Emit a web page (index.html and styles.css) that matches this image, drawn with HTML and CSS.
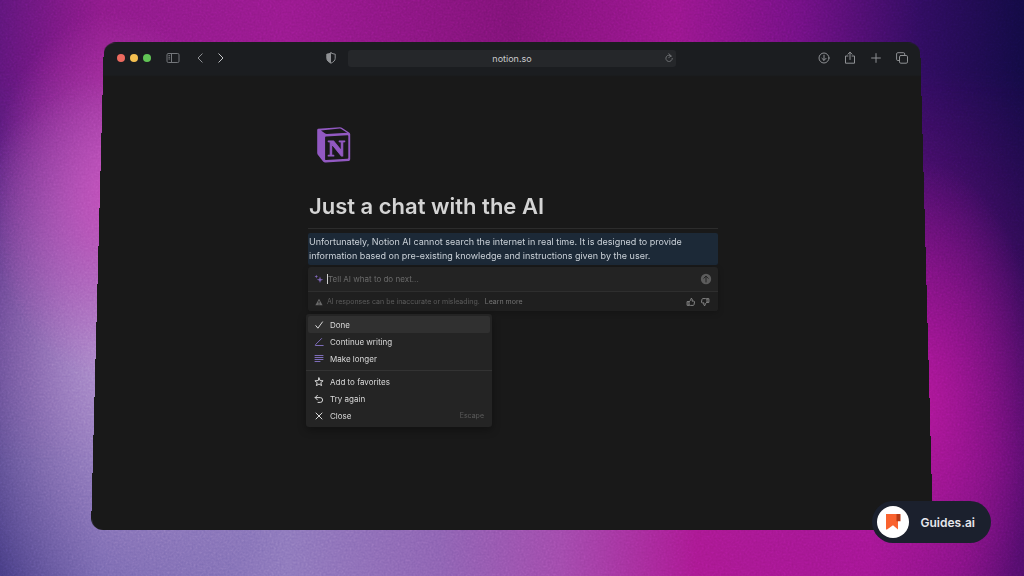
FILE: index.html
```html
<!DOCTYPE html>
<html lang="en">
<head>
<meta charset="utf-8">
<meta name="viewport" content="width=device-width, initial-scale=1">
<title>Just a chat with the AI</title>
<link rel="stylesheet" href="styles.css">
</head>
<body class="stage">
<svg class="grain" aria-hidden="true"><filter id="noise"><feTurbulence type="fractalNoise" baseFrequency="0.5" numOctaves="2" seed="4"/><feColorMatrix type="saturate" values="0"/></filter><rect width="100%" height="100%" filter="url(#noise)"/></svg>
<div class="window">
  <header class="toolbar">
    <div class="tools">
      <div class="lights"><i class="light red"></i><i class="light yellow"></i><i class="light green"></i></div>
      <button class="icon-btn sidebar" aria-label="Show sidebar"><svg width="14" height="12" viewBox="0 0 14 12"><rect x="1" y="1.500" width="12" height="9" rx="1.300"/><path d="M5.500 1.500v9M2.800 3.600h.9M2.800 5.300h.9M2.800 7h.9"/></svg></button>
      <div class="nav">
        <button class="icon-btn" aria-label="Back"><svg width="8" height="12" viewBox="0 0 8 12"><path d="M6.200 1.800 2 6l4.200 4.200"/></svg></button>
        <button class="icon-btn bright" aria-label="Forward"><svg width="8" height="12" viewBox="0 0 8 12"><path d="M1.800 1.800 6 6l-4.200 4.200"/></svg></button>
      </div>
      <button class="icon-btn shield" aria-label="Privacy report"><svg width="12" height="12" viewBox="0 0 12 12"><path d="M6 .9c1.300.8 2.700 1.100 4.200 1.200v4.200c0 2.200-1.700 3.700-4.200 4.900C3.500 10 1.800 8.500 1.800 6.300V2.100C3.300 2 4.700 1.700 6 .9Z"/><path class="solid" d="M6 .9v10.300C3.500 10 1.800 8.500 1.800 6.300V2.100C3.300 2 4.700 1.700 6 .9Z"/></svg></button>
    </div>
    <div class="address">
      <input class="address-input" type="text" value="notion.so" aria-label="Address">
      <button class="icon-btn reload" aria-label="Reload"><svg width="10" height="10" viewBox="0 0 10 10"><path d="M7.300 3A3.200 3.200 0 1 0 8.300 5.400M4.800.7 7.300 3 4.800 4.500"/></svg></button>
    </div>
    <div class="actions">
      <button class="icon-btn" aria-label="Downloads"><svg width="12" height="12" viewBox="0 0 12 12"><circle cx="6" cy="6" r="5"/><path d="M6 3.200v5M3.900 6.300 6 8.400l2.100-2.100"/></svg></button>
      <button class="icon-btn" aria-label="Share"><svg width="12" height="14" viewBox="0 0 12 14"><path d="M4 5H1.500v7.200h9V5H8M6 8.500V1.300M3.900 3.200 6 1.200l2.100 2"/></svg></button>
      <button class="icon-btn" aria-label="New tab"><svg width="12" height="12" viewBox="0 0 12 12"><path d="M6 1.600v8.800M1.600 6h8.800"/></svg></button>
      <button class="icon-btn" aria-label="Tab overview"><svg width="12" height="12" viewBox="0 0 12 12"><rect x="3.500" y="3.500" width="8" height="7.700" rx="1.300"/><path d="M3.500 8.500H1.800a1.200 1.200 0 0 1-1.200-1.200V1.900A1.200 1.200 0 0 1 1.800.7h5.700a1.200 1.200 0 0 1 1.200 1.200v1.600"/></svg></button>
    </div>
  </header>
  <main class="page">
    <svg class="logo" width="38" height="38" viewBox="0 0 38 38" role="img" aria-label="Notion"><path class="face" fill-rule="evenodd" d="M3 2.800 25 1.200q1.200 0 2.200.7l7.200 4.800q.8.600.8 1.600v25q0 1.500-1.600 1.700L10.500 36.500q-1.500.1-2.400-1.100L3 28.900q-.8-1-.8-2.200V4q0-1 .8-1.200ZM6 4.400l4.200 3.200q.6.400 1.500.4l20.500-1.300-6-3.800q-.6-.4-1.400-.3ZM11 10.600q-.9.100-.9 1v21.600q0 1 1 .9l21.200-1.300q1-.1 1-1V10.100q0-.9-.9-.8Z"/><text class="logo-letter" x="21.500" y="30" text-anchor="middle">N</text></svg>
    <h1 class="title">Just a chat with the AI</h1>
    <p class="answer">Unfortunately, Notion AI cannot search the internet in real time. It is designed to provide information based on pre-existing knowledge and instructions given by the user.</p>
    <section class="prompt">
      <div class="prompt-row">
        <svg class="spark" width="10" height="10" viewBox="0 0 10 10"><path d="M6 2.500 6.800 5l2.500.8-2.500.8L6 9.100l-.8-2.500-2.500-.8L5.200 5ZM2.300.8l.5 1.300 1.300.5-1.300.5-.5 1.300-.5-1.300L.5 2.600l1.300-.5Z"/></svg>
        <span class="caret"></span>
        <input class="prompt-input" type="text" placeholder="Tell AI what to do next..." aria-label="Tell AI what to do next">
        <button class="icon-btn send" aria-label="Send"><svg width="12" height="12" viewBox="0 0 12 12"><circle cx="6" cy="6" r="5.200"/><path d="M6 9V3.300M3.800 5.300 6 3.100l2.200 2.200"/></svg></button>
      </div>
      <div class="prompt-row note">
        <svg class="warn" width="8" height="8" viewBox="0 0 8 8"><path d="M4 .8 7.600 7.200H.4Z"/><path class="mark" d="M4 3.400v1.200M4 6v.1"/></svg>
        <span class="note-text">AI responses can be inaccurate or misleading.</span>
        <a class="more" href="#">Learn more</a>
        <button class="icon-btn thumb" aria-label="Good response"><svg width="10" height="10" viewBox="0 0 10 10"><path d="M1.500 4.600h1.500v3.700H1.500ZM3 4.800 4.700 3.200l.4-1.800q1.200 0 1.200 1.300L6 4.100h1.700q.9.100.8.900L8 7.700q-.2.700-.9.700H4.300L3 8"/></svg></button>
        <button class="icon-btn thumb" aria-label="Bad response"><svg width="10" height="10" viewBox="0 0 10 10"><path d="M8.500 5.400H7V1.700h1.500ZM7 5.200 5.300 6.800l-.4 1.800q-1.200 0-1.200-1.300L4 5.900H2.300q-.9-.1-.8-.9L2 2.300q.2-.7.9-.7h2.800L7 2"/></svg></button>
      </div>
    </section>
    <nav class="menu" aria-label="AI actions">
      <div class="group">
        <button class="item active"><svg width="10" height="10" viewBox="0 0 10 10"><path d="m1.800 5.600 2.100 2.600 4.600-6.300"/></svg>Done</button>
        <button class="item"><svg class="violet" width="10" height="10" viewBox="0 0 10 10"><path d="M7.600 1.500 1.800 7.300l-.5 1.200h7.900"/></svg>Continue writing</button>
        <button class="item"><svg class="violet" width="10" height="10" viewBox="0 0 10 10"><path d="M1 1.500h8M1 3.500h8M1 5.500h8M1 7.500h5"/></svg>Make longer</button>
      </div>
      <div class="group">
        <button class="item"><svg width="10" height="10" viewBox="0 0 10 10"><path d="m5 .9 1.100 2.700 3 .2-2.300 1.900.8 2.900L5 7 2.400 8.600l.8-2.900L.9 3.800l3-.2Z"/></svg>Add to favorites</button>
        <button class="item"><svg width="10" height="10" viewBox="0 0 10 10"><path d="M3.400 1.300 1.200 3.600l2.200 2.300M1.200 3.600h5a2.300 2.300 0 0 1 0 4.800H4"/></svg>Try again</button>
        <button class="item"><svg width="10" height="10" viewBox="0 0 10 10"><path d="m2 2 6 6M8 2 2 8"/></svg>Close<kbd class="key">Escape</kbd></button>
      </div>
    </nav>
  </main>
</div>
<a class="badge" href="#"><span class="badge-mark"><svg width="18" height="20" viewBox="0 0 18 20"><path fill="#f9622e" d="M2 2h12v15.500l-5-4.200-6 4.200H2Z"/><path fill="#b83b16" d="M12.500 2H16q.5 0 .5.600v6.600h-4Z"/></svg></span>Guides.ai</a>
</body>
</html>
```
FILE: styles.css
```css
* { box-sizing: border-box; }

.stage {
  margin: 0;
  min-height: 100vh;
  padding: 42px 91px 46px;
  display: flex;
  flex-direction: column;
  position: relative;
  overflow: hidden;
  font-family: Inter, "Liberation Sans", sans-serif;
  color: #d4d4d4;
  background: linear-gradient(90deg, #443a80 0%, #6a5ea8 10%, #8a75ba 28%, #8a60b0 43%, #9f48a9 55%, #a8188f 68%, #a01590 85%, #75107c 94%, #4f0c68 100%);
}

/* Upper colours, fading down into the lower ones, with glows at both sides */
.stage::before {
  content: "";
  position: absolute;
  inset: 0;
  background: linear-gradient(90deg, #5d1577 0%, #8a1a86 10%, #96198b 28%, #7c1274 50%, #96168a 66%, #6f1080 78%, #2e0c5c 90%, #120a42 100%);
  mask-image: linear-gradient(#000 12%, transparent 80%);
}

.stage::after {
  content: "";
  position: absolute;
  inset: 0;
  background:
    radial-gradient(ellipse 12% 32% at 11% 34%, #c04cb8 0%, #c04cb880 45%, #c04cb800 100%),
    radial-gradient(ellipse 18% 48% at 11% 62%, #ac8ccc 0%, #ac8ccc80 45%, #ac8ccc00 100%),
    radial-gradient(ellipse 12% 42% at 90% 70%, #ac1695 0%, #ac169580 45%, #ac169500 100%);
}

button, input {
  font: inherit;
  color: inherit;
  background: none;
  border: 0;
  padding: 0;
  margin: 0;
}

a { color: inherit; text-decoration: none; }

svg {
  display: block;
  flex: none;
  fill: none;
  stroke: currentColor;
  stroke-linecap: round;
  stroke-linejoin: round;
}

.grain {
  position: absolute;
  z-index: 1;
  inset: 0;
  width: 100%;
  height: 100%;
  stroke: none;
  opacity: 0.3;
  mix-blend-mode: overlay;
}

/* Browser window, tilted slightly away at the top */
.window {
  position: relative;
  z-index: 1;
  flex: 1;
  display: flex;
  flex-direction: column;
}

.window::before {
  content: "";
  position: absolute;
  inset: -16px 0 0;
  border-radius: 12px;
  background: linear-gradient(#1b1d20 35px, #191919 36px);
  transform: perspective(1000px) rotateX(3.6deg);
  transform-origin: bottom center;
}

.toolbar {
  position: relative;
  display: grid;
  grid-template-columns: 1fr minmax(0, 328px) 1fr;
  align-items: center;
  height: 32px;
  padding: 0 25px;
}

.tools, .actions, .lights, .nav { display: flex; align-items: center; }
.tools { padding-left: 1px; }
.lights { gap: 5px; }
.light { width: 8px; height: 8px; border-radius: 50%; }
.red { background: #ec6a5f; }
.yellow { background: #f4bf50; }
.green { background: #61c455; }
.icon-btn { display: block; color: #8f9194; }
.icon-btn.bright { color: #c4c6c8; }
.icon-btn.sidebar { margin-left: 15px; color: #74777b; }
.nav { gap: 13px; margin-left: 16px; }
.shield { margin-left: auto; margin-right: 11px; }
.shield .solid { fill: currentColor; stroke: none; }
.actions { justify-content: flex-end; gap: 14px; }

.address {
  display: flex;
  align-items: center;
  height: 17px;
  padding: 0 2px 0 12px;
  border-radius: 3px;
  background: #25272a;
}

.address-input {
  flex: 1;
  min-width: 0;
  text-align: center;
  font-size: 9px;
  color: #cacbcd;
}

.icon-btn.reload { color: #6c6e71; }

/* Document */
.page {
  position: relative;
  width: 100%;
  max-width: 412px;
  margin: 0 auto;
  padding: 52px 0 0 2px;
  display: flex;
  flex-direction: column;
}

.logo { margin-left: 7px; stroke: none; color: #9259c2; }
.face { fill: currentColor; }

.logo-letter {
  fill: currentColor;
  stroke: currentColor;
  font: bold 24px "Liberation Serif", serif;
}

.title {
  margin: 28px 0 0;
  padding: 0 0 8px 1px;
  border-bottom: 1px solid #2c2c2c;
  font-size: 22px;
  line-height: 28px;
  font-weight: 600;
}

.answer {
  margin: 4px 0 2px;
  padding: 2px 1px;
  border-radius: 2px;
  background: #1c2937;
  color: #cbd2d9;
  font-size: 9px;
  line-height: 14px;
}

.prompt {
  border-radius: 3px;
  background: #232323;
  box-shadow: 0 2px 6px #00000033;
}

.prompt-row {
  display: flex;
  align-items: center;
  height: 24px;
  padding: 0 6px;
}

.spark { fill: currentColor; stroke: none; color: #8067bb; }
.caret { width: 1px; height: 10px; margin-left: 3px; background: #cfcfcf; }
.prompt-input { flex: 1; min-width: 0; font-size: 8px; }
.prompt-input::placeholder { color: #6b6b6b; opacity: 1; }
.icon-btn.send { color: #232323; }
.send circle { fill: #5c5c5c; stroke: none; }

.note {
  height: 20px;
  border-top: 1px solid #2e2e2e;
  background: #1f1f1f;
  border-radius: 0 0 3px 3px;
  padding: 0 8px 0 7px;
  font-size: 7px;
  color: #5c5c5c;
}

.warn { fill: currentColor; stroke: none; color: #6a6a6a; }
.warn .mark { stroke: #1f1f1f; }
.note-text { margin-left: 4px; }
.more { margin-left: 5px; margin-right: auto; color: #747474; }
.icon-btn.thumb { margin-left: 4px; color: #858585; }

.menu {
  width: 186px;
  margin-top: 3px;
  margin-left: -2px;
  border-radius: 3px;
  background: #242424;
  box-shadow: 0 3px 9px #00000055;
}

.group { padding: 2px 2px 3px; }
.group + .group { border-top: 1px solid #333333; }

.item {
  display: flex;
  align-items: center;
  gap: 6px;
  width: 100%;
  height: 17px;
  padding: 0 6px;
  border-radius: 2px;
  font-size: 8px;
  text-align: left;
  color: #dadada;
}

.active { background: #303030; }
.violet { color: #7d6cb8; }
.key { margin-left: auto; font: inherit; font-size: 7px; color: #5c5c5c; }

/* Brand pill over the window's corner */
.badge {
  position: absolute;
  z-index: 2;
  right: 33px;
  bottom: 33px;
  display: flex;
  align-items: center;
  gap: 11px;
  padding: 5px 16px 5px 5px;
  border-radius: 21px;
  background: #1b202d;
  color: #e6e7ec;
  font-size: 12px;
  font-weight: 600;
}

.badge-mark {
  display: grid;
  place-items: center;
  width: 32px;
  height: 32px;
  border-radius: 50%;
  background: #ffffff;
}

.badge-mark svg { stroke: none; }
```
